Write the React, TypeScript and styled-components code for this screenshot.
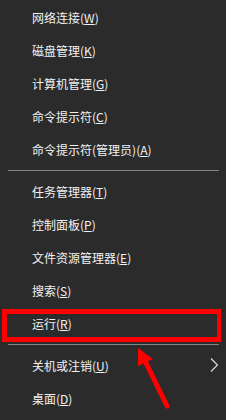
import React from "react";
import styled, { createGlobalStyle } from "styled-components";

const Global = createGlobalStyle`
  html, body {
    margin: 0;
    padding: 0;
    background: #2b2b2b;
  }
  body {
    font-family: "Microsoft YaHei", "Noto Sans CJK SC", "Noto Sans", sans-serif;
  }
`;

const Menu = styled.div`
  position: relative;
  width: 226px;
  min-height: 420px;
  padding-top: 1px;
  box-sizing: border-box;
  background: #2b2b2b;
  display: flex;
  flex-direction: column;
`;

const Row = styled.div`
  position: relative;
  height: 33px;
  display: flex;
  align-items: center;
  justify-content: space-between;
  padding: 0 7px 0 32px;
  color: #f2f2f2;
  font-size: 12px;
  line-height: 16px;
  white-space: nowrap;
`;

const Label = styled.span`
  display: inline-block;
`;

const Key = styled.span`
  text-decoration: underline;
  text-decoration-thickness: 1px;
  text-underline-offset: 1px;
`;

const Separator = styled.div`
  height: 1px;
  margin: 4px 7px 4px 8px;
  background: #848484;
`;

const Highlight = styled.div`
  position: absolute;
  top: 2px;
  left: 2px;
  width: 219px;
  height: 33px;
  box-sizing: border-box;
  border: 5px solid #ff0000;
  border-right-width: 4px;
  pointer-events: none;
`;

const Overlay = styled.svg`
  position: absolute;
  left: 0;
  top: 0;
  width: 226px;
  height: 420px;
  pointer-events: none;
`;

const Chevron = styled.svg`
  width: 9px;
  height: 14px;
  margin-top: -2px;
  flex: none;
`;

type Item = { text: string; key: string; sub?: boolean; marked?: boolean };

const groups: Item[][] = [
  [
    { text: "网络连接", key: "W" },
    { text: "磁盘管理", key: "K" },
    { text: "计算机管理", key: "G" },
    { text: "命令提示符", key: "C" },
    { text: "命令提示符(管理员)", key: "A" },
  ],
  [
    { text: "任务管理器", key: "T" },
    { text: "控制面板", key: "P" },
    { text: "文件资源管理器", key: "E" },
    { text: "搜索", key: "S" },
    { text: "运行", key: "R", marked: true },
  ],
  [
    { text: "关机或注销", key: "U", sub: true },
    { text: "桌面", key: "D" },
  ],
];

export default function App() {
  return (
    <>
      <Global />
      <Menu>
        {groups.map((g, gi) => (
          <React.Fragment key={gi}>
            {gi > 0 && <Separator />}
            {g.map((it) => (
              <Row key={it.text}>
                <Label>
                  {it.text}(<Key>{it.key}</Key>)
                </Label>
                {it.sub && (
                  <Chevron viewBox="0 0 9 14">
                    <path d="M1 0.5 L7.5 7 L1 13.5" fill="none" stroke="#e0e0e0" strokeWidth="1.1" />
                  </Chevron>
                )}
                {it.marked && <Highlight />}
              </Row>
            ))}
          </React.Fragment>
        ))}
        <Overlay viewBox="0 0 226 420">
          <polygon points="138,348 153,359 138,366" fill="#ff0000" />
          <line x1="145" y1="361" x2="167" y2="406" stroke="#ff0000" strokeWidth="5" strokeLinecap="round" />
        </Overlay>
      </Menu>
    </>
  );
}
